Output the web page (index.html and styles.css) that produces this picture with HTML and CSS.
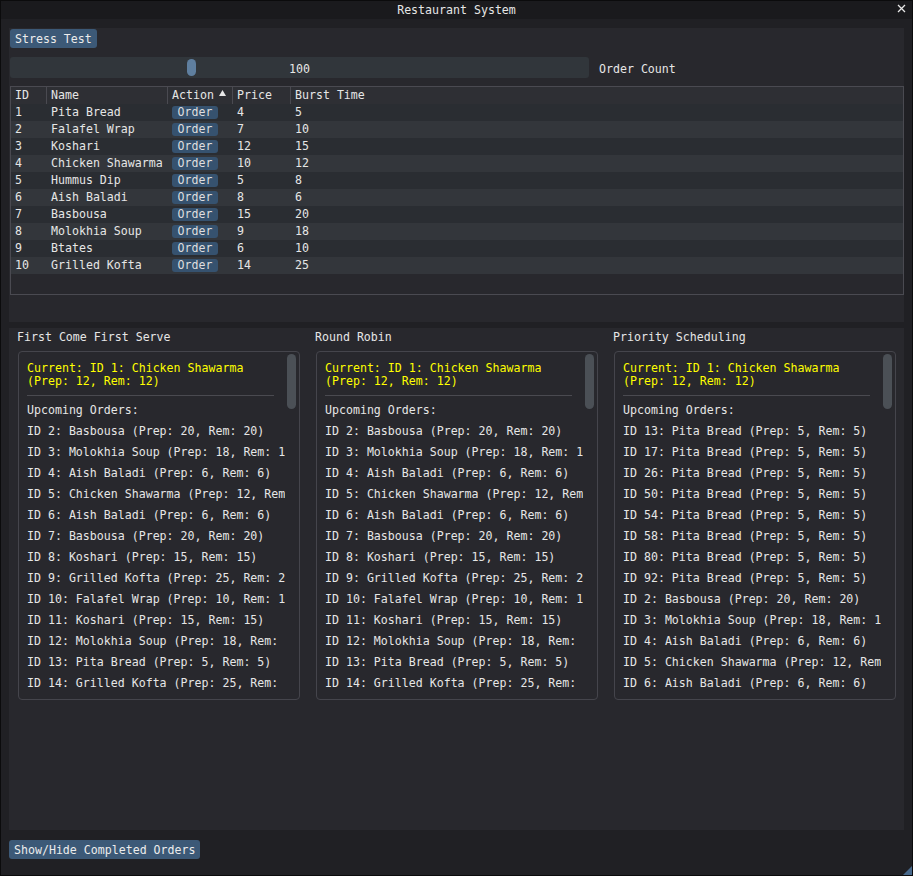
FILE: index.html
```html
<!DOCTYPE html>
<html>
<head>
<meta charset="utf-8">
<link rel="stylesheet" href="styles.css">
</head>
<body>
<div class="window">
  <div class="titlebar">
    <span class="title">Restaurant System</span>
    <svg class="close" width="9" height="9" viewBox="0 0 9 9"><path d="M1 1L8 8M8 1L1 8" stroke="#e8e8e8" stroke-width="1.3"/></svg>
  </div>
  <div class="body">
    <div class="child top">
      <button class="btn">Stress Test</button>
      <div class="slider-row">
        <div class="slider"><div class="grab" style="left:177px"></div><span>100</span></div>
        <span class="label">Order Count</span>
      </div>
      <div class="table">
        <div class="tr th">
          <div class="c1">ID</div><div class="c2">Name</div><div class="c3">Action <svg class="sort" width="7" height="6" viewBox="0 0 7 6"><path d="M3.5 0L7 6H0Z" fill="#e8e8e8"/></svg></div><div class="c4">Price</div><div class="c5">Burst Time</div>
        </div>
        <div class="tr odd"><div class="c1">1</div><div class="c2">Pita Bread</div><div class="c3"><span class="obtn">Order</span></div><div class="c4">4</div><div class="c5">5</div></div>
        <div class="tr even"><div class="c1">2</div><div class="c2">Falafel Wrap</div><div class="c3"><span class="obtn">Order</span></div><div class="c4">7</div><div class="c5">10</div></div>
        <div class="tr odd"><div class="c1">3</div><div class="c2">Koshari</div><div class="c3"><span class="obtn">Order</span></div><div class="c4">12</div><div class="c5">15</div></div>
        <div class="tr even"><div class="c1">4</div><div class="c2">Chicken Shawarma</div><div class="c3"><span class="obtn">Order</span></div><div class="c4">10</div><div class="c5">12</div></div>
        <div class="tr odd"><div class="c1">5</div><div class="c2">Hummus Dip</div><div class="c3"><span class="obtn">Order</span></div><div class="c4">5</div><div class="c5">8</div></div>
        <div class="tr even"><div class="c1">6</div><div class="c2">Aish Baladi</div><div class="c3"><span class="obtn">Order</span></div><div class="c4">8</div><div class="c5">6</div></div>
        <div class="tr odd"><div class="c1">7</div><div class="c2">Basbousa</div><div class="c3"><span class="obtn">Order</span></div><div class="c4">15</div><div class="c5">20</div></div>
        <div class="tr even"><div class="c1">8</div><div class="c2">Molokhia Soup</div><div class="c3"><span class="obtn">Order</span></div><div class="c4">9</div><div class="c5">18</div></div>
        <div class="tr odd"><div class="c1">9</div><div class="c2">Btates</div><div class="c3"><span class="obtn">Order</span></div><div class="c4">6</div><div class="c5">10</div></div>
        <div class="tr even"><div class="c1">10</div><div class="c2">Grilled Kofta</div><div class="c3"><span class="obtn">Order</span></div><div class="c4">14</div><div class="c5">25</div></div>
      </div>
    </div>
    <div class="child bottom">
      <div class="panels">
        <div class="pcol">
          <div class="ptitle">First Come First Serve</div>
          <div class="pbox">
            <div class="pcontent">
              <div class="current">Current: ID 1: Chicken Shawarma<br>(Prep: 12, Rem: 12)</div>
              <div class="sep"></div>
              <div class="list">
                <div>Upcoming Orders:</div>
                <div>ID 2: Basbousa (Prep: 20, Rem: 20)</div>
                <div>ID 3: Molokhia Soup (Prep: 18, Rem: 18)</div>
                <div>ID 4: Aish Baladi (Prep: 6, Rem: 6)</div>
                <div>ID 5: Chicken Shawarma (Prep: 12, Rem: 12)</div>
                <div>ID 6: Aish Baladi (Prep: 6, Rem: 6)</div>
                <div>ID 7: Basbousa (Prep: 20, Rem: 20)</div>
                <div>ID 8: Koshari (Prep: 15, Rem: 15)</div>
                <div>ID 9: Grilled Kofta (Prep: 25, Rem: 25)</div>
                <div>ID 10: Falafel Wrap (Prep: 10, Rem: 10)</div>
                <div>ID 11: Koshari (Prep: 15, Rem: 15)</div>
                <div>ID 12: Molokhia Soup (Prep: 18, Rem: 18)</div>
                <div>ID 13: Pita Bread (Prep: 5, Rem: 5)</div>
                <div>ID 14: Grilled Kofta (Prep: 25, Rem: 25)</div>
                <div>ID 15: Chicken Shawarma (Prep: 12, Rem: 12)</div>
              </div>
            </div>
            <div class="scroll"><div class="sgrab"></div></div>
          </div>
        </div>
        <div class="pcol">
          <div class="ptitle">Round Robin</div>
          <div class="pbox">
            <div class="pcontent">
              <div class="current">Current: ID 1: Chicken Shawarma<br>(Prep: 12, Rem: 12)</div>
              <div class="sep"></div>
              <div class="list">
                <div>Upcoming Orders:</div>
                <div>ID 2: Basbousa (Prep: 20, Rem: 20)</div>
                <div>ID 3: Molokhia Soup (Prep: 18, Rem: 18)</div>
                <div>ID 4: Aish Baladi (Prep: 6, Rem: 6)</div>
                <div>ID 5: Chicken Shawarma (Prep: 12, Rem: 12)</div>
                <div>ID 6: Aish Baladi (Prep: 6, Rem: 6)</div>
                <div>ID 7: Basbousa (Prep: 20, Rem: 20)</div>
                <div>ID 8: Koshari (Prep: 15, Rem: 15)</div>
                <div>ID 9: Grilled Kofta (Prep: 25, Rem: 25)</div>
                <div>ID 10: Falafel Wrap (Prep: 10, Rem: 10)</div>
                <div>ID 11: Koshari (Prep: 15, Rem: 15)</div>
                <div>ID 12: Molokhia Soup (Prep: 18, Rem: 18)</div>
                <div>ID 13: Pita Bread (Prep: 5, Rem: 5)</div>
                <div>ID 14: Grilled Kofta (Prep: 25, Rem: 25)</div>
                <div>ID 15: Chicken Shawarma (Prep: 12, Rem: 12)</div>
              </div>
            </div>
            <div class="scroll"><div class="sgrab"></div></div>
          </div>
        </div>
        <div class="pcol">
          <div class="ptitle">Priority Scheduling</div>
          <div class="pbox">
            <div class="pcontent">
              <div class="current">Current: ID 1: Chicken Shawarma<br>(Prep: 12, Rem: 12)</div>
              <div class="sep"></div>
              <div class="list">
                <div>Upcoming Orders:</div>
                <div>ID 13: Pita Bread (Prep: 5, Rem: 5)</div>
                <div>ID 17: Pita Bread (Prep: 5, Rem: 5)</div>
                <div>ID 26: Pita Bread (Prep: 5, Rem: 5)</div>
                <div>ID 50: Pita Bread (Prep: 5, Rem: 5)</div>
                <div>ID 54: Pita Bread (Prep: 5, Rem: 5)</div>
                <div>ID 58: Pita Bread (Prep: 5, Rem: 5)</div>
                <div>ID 80: Pita Bread (Prep: 5, Rem: 5)</div>
                <div>ID 92: Pita Bread (Prep: 5, Rem: 5)</div>
                <div>ID 2: Basbousa (Prep: 20, Rem: 20)</div>
                <div>ID 3: Molokhia Soup (Prep: 18, Rem: 18)</div>
                <div>ID 4: Aish Baladi (Prep: 6, Rem: 6)</div>
                <div>ID 5: Chicken Shawarma (Prep: 12, Rem: 12)</div>
                <div>ID 6: Aish Baladi (Prep: 6, Rem: 6)</div>
                <div>ID 7: Basbousa (Prep: 20, Rem: 20)</div>
              </div>
            </div>
            <div class="scroll"><div class="sgrab"></div></div>
          </div>
        </div>
      </div>
    </div>
    <button class="btn bottom-btn">Show/Hide Completed Orders</button>
  </div>
  <div class="grip"></div>
</div>
</body>
</html>
```

FILE: styles.css
```css
* { box-sizing: border-box; }
html, body { margin: 0; padding: 0; background: #0d0d0f; }
body {
  font-family: "DejaVu Sans Mono", "Liberation Mono", monospace;
  font-size: 11.6px;
  color: #e6e6e6;
}
.window {
  position: relative;
  width: 913px;
  height: 876px;
  border: 1px solid #0b0b0c;
  background: #202024;
  display: flex;
  flex-direction: column;
  overflow: hidden;
}
.titlebar {
  height: 18px;
  flex: none;
  background: #1a1a1d;
  display: flex;
  align-items: center;
  justify-content: center;
  position: relative;
}
.title { line-height: 18px; }
.close { position: absolute; right: 6px; top: 3px; }
.body {
  flex: 1;
  padding: 9px 8px 0 8px;
  display: flex;
  flex-direction: column;
  align-items: flex-start;
}
.child {
  width: 895px;
  background: #28282d;
  flex: none;
}
.child.top {
  height: 294px;
  padding: 1px 0 0 1px;
  display: flex;
  flex-direction: column;
  align-items: flex-start;
}
.btn {
  font: inherit;
  color: #ececec;
  background: #3c5977;
  border: none;
  border-radius: 3px;
  height: 19px;
  padding: 1px 5px 0 5px;
  line-height: 18px;
  margin: 0;
}
.slider-row {
  margin-top: 9px;
  height: 21px;
  display: flex;
  align-items: flex-start;
  gap: 10px;
}
.slider {
  position: relative;
  width: 579px;
  height: 21px;
  background: #31363b;
  border-radius: 3px;
  display: flex;
  justify-content: center;
}
.slider span, .label {
  height: 21px;
  line-height: 20px;
  padding-top: 2px;
}
.grab {
  position: absolute;
  top: 2px;
  width: 9px;
  height: 17px;
  border-radius: 5px;
  background: #5f7f9f;
}
.table {
  margin-top: 8px;
  width: 894px;
  height: 209px;
  border: 1px solid #4a4a51;
  background: #28282d;
}
.tr {
  display: grid;
  grid-template-columns: 35px 121px 65px 58px 1fr;
  height: 17px;
  line-height: 17px;
  white-space: nowrap;
}
.tr > div { padding-left: 5px; overflow: hidden; }
.tr > .c1 { padding-left: 4px; }
.th { height: 17px; line-height: 16px; background: #2e2f34; }
.th > div + div { border-left: 1px solid #4a4a51; padding-left: 4px; }
.th .c3 { position: relative; }
.sort { position: absolute; left: 51px; top: 3px; }
.odd { background: #2a2d32; }
.even { background: #33363b; }
.obtn {
  display: inline-block;
  width: 46px;
  height: 13px;
  line-height: 13px;
  margin-top: 2px;
  vertical-align: top;
  text-align: center;
  background: #36526f;
  border-radius: 3px;
  color: #dedede;
}
.child.bottom {
  margin-top: 6px;
  height: 502px;
  padding: 3px 8px 0 8px;
}
.panels {
  display: flex;
}
.pcol {
  width: 298px;
  flex: none;
}
.ptitle {
  line-height: 13px;
  height: 13px;
  margin-bottom: 7px;
}
.pbox {
  margin-left: 1px;
  width: 282px;
  height: 349px;
  border: 1px solid #45454c;
  border-radius: 4px;
  display: flex;
  overflow: hidden;
}
.pcontent {
  width: 266px;
  padding: 10px 0 0 8px;
  overflow: hidden;
  flex: none;
}
.current {
  color: #ffff00;
  line-height: 13px;
  white-space: nowrap;
}
.sep {
  margin-top: 7px;
  width: 247px;
  height: 1px;
  background: #4a4a50;
}
.list {
  margin-top: 4px;
  line-height: 21px;
  white-space: nowrap;
}
.scroll {
  flex: none;
  width: 14px;
  padding: 2px 0 0 2px;
}
.sgrab {
  width: 9px;
  height: 55px;
  border-radius: 5px;
  background: #4b5056;
}
.bottom-btn { margin-top: 10px; }
.grip {
  position: absolute;
  right: 0;
  bottom: 0;
  width: 9px;
  height: 9px;
  background: #48698c;
  clip-path: polygon(100% 0, 100% 100%, 0 100%);
}
```
